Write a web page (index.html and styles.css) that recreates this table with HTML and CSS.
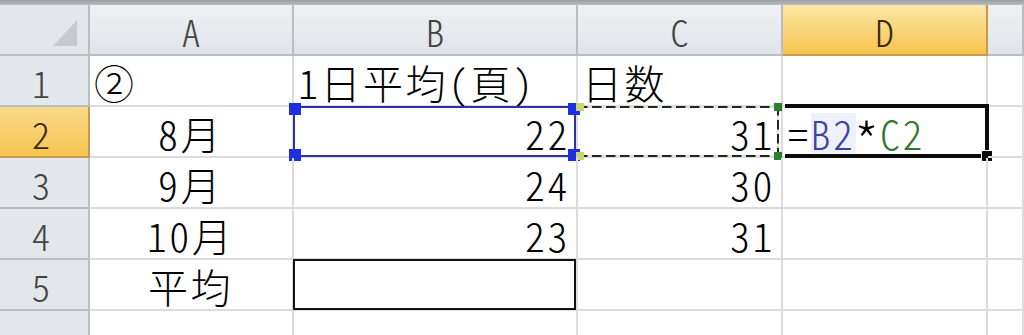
FILE: index.html
```html
<!DOCTYPE html>
<html lang="ja">
<head>
<meta charset="utf-8">
<title>Sheet1</title>
<link rel="stylesheet" href="styles.css">
</head>
<body>
<div class="sheet">
  <div class="topbar"></div>
  <div class="grid">
    <div class="hd corner">
      <svg class="corner-tri" width="24" height="26" viewBox="0 0 24 26"><polygon points="24,0 24,26 0,26" fill="#c6cacf"/></svg>
    </div>
    <div class="hd col">A</div>
    <div class="hd col">B</div>
    <div class="hd col">C</div>
    <div class="hd col active">D</div>
    <div class="hd col"></div>

    <div class="hd row">1</div>
    <div class="cell left">②</div>
    <div class="cell left">1日平均(頁)</div>
    <div class="cell left">日数</div>
    <div class="cell"></div>
    <div class="cell"></div>

    <div class="hd row active">2</div>
    <div class="cell center">8月</div>
    <div class="cell num">22
      <div class="ref-blue">
        <span class="h tl"></span><span class="h tr"></span><span class="h bl"></span><span class="h br"></span>
      </div>
    </div>
    <div class="cell num">31
      <div class="ants">
        <span class="g tl"></span><span class="g tr"></span><span class="g bl"></span><span class="g br"></span>
      </div>
    </div>
    <div class="cell left edit">=<span class="r-b">B2</span><span class="op">*</span><span class="r-c">C2</span>
      <div class="active-box"><span class="fill"></span></div>
    </div>
    <div class="cell"></div>

    <div class="hd row">3</div>
    <div class="cell center">9月</div>
    <div class="cell num">24</div>
    <div class="cell num">30</div>
    <div class="cell"></div>
    <div class="cell"></div>

    <div class="hd row">4</div>
    <div class="cell center">10月</div>
    <div class="cell num">23</div>
    <div class="cell num">31</div>
    <div class="cell"></div>
    <div class="cell"></div>

    <div class="hd row">5</div>
    <div class="cell center">平均</div>
    <div class="cell"><div class="boxed"></div></div>
    <div class="cell"></div>
    <div class="cell"></div>
    <div class="cell"></div>

    <div class="hd row">6</div>
    <div class="cell"></div>
    <div class="cell"></div>
    <div class="cell"></div>
    <div class="cell"></div>
    <div class="cell"></div>
  </div>
</div>
</body>
</html>
```
FILE: styles.css
```css
html, body {
  margin: 0;
  padding: 0;
  background: #ffffff;
}

.sheet {
  width: 1024px;
  height: 335px;
  overflow: hidden;
  font-family: "Noto Sans CJK JP", "Noto Sans", sans-serif;
  font-weight: 300;
  font-feature-settings: "hwid";
}

.topbar {
  height: 5px;
  background: linear-gradient(#9a9ea4, #b9bdc2);
}

.grid {
  display: grid;
  grid-template-columns: 90px 204px 284px 205px 205px 1fr;
  grid-template-rows: 51px 51px 51px 51px 51px 51px 60px;
}

/* headers */
.hd {
  box-sizing: border-box;
  border-right: 2px solid #b9bec5;
  border-bottom: 2px solid #b9bec5;
  background: linear-gradient(#eef0f3, #e0e4e9);
  color: #444444;
  font-size: 37px;
  line-height: 36px;
  display: flex;
  align-items: flex-end;
  justify-content: center;
  padding-bottom: 5px;
}

.hd.row {
  background: #e3e6ea;
  justify-content: center;
  padding-right: 6px;
}

.hd.corner {
  position: relative;
  background: #e3e6ea;
}

.corner-tri {
  position: absolute;
  left: 53px;
  top: 15px;
}

.hd.active {
  background: linear-gradient(#fce7a4, #f7c34f);
  border-right-color: #c69b45;
  border-bottom-color: #c69b45;
  color: #3a2c12;
}

.hd.row.active {
  background: linear-gradient(#fad98a, #f6c552);
}

/* cells */
.cell {
  position: relative;
  box-sizing: border-box;
  border-right: 2px solid #dadcdf;
  border-bottom: 2px solid #dadcdf;
  color: #000;
  font-size: 40px;
  line-height: 40px;
  letter-spacing: 2.5px;
  display: flex;
  align-items: flex-end;
  padding: 0 5px 3px 4px;
  white-space: nowrap;
}

.cell.center { justify-content: center; }
.cell.num { justify-content: flex-end; padding-right: 6px; }
.cell.left { justify-content: flex-start; }

.cell.edit { padding-left: 5px; }

.r-b {
  color: #3c41a8;
  background: #eef0fa;
}

.op {
  display: inline-block;
  margin: 0 1px;
  transform: translateY(7px) scale(1.35);
}

.r-c { color: #2e7a2e; }

/* referenced range B2 */
.ref-blue {
  position: absolute;
  left: -1px;
  top: -1px;
  right: 0;
  bottom: -1px;
  border: 2px solid #2d31a3;
}

.h {
  position: absolute;
  width: 12px;
  height: 12px;
  background: #1e2fe0;
}
.h.tl { left: -6px; top: -5px; }
.h.tr { right: -6px; top: -5px; }
.h.bl { left: -6px; bottom: -6px; }
.h.br { right: -6px; bottom: -6px; }

/* copy/reference marquee on C2 */
.ants {
  position: absolute;
  left: 0;
  top: -1px;
  right: 2px;
  bottom: -1px;
  background:
    repeating-linear-gradient(90deg, #1d2a1d 0 9px, #5e9a5e 9px 10px, #ecd6e8 10px 14px) top / 100% 2px no-repeat,
    repeating-linear-gradient(90deg, #1d2a1d 0 9px, #5e9a5e 9px 10px, #ecd6e8 10px 14px) bottom / 100% 2px no-repeat,
    repeating-linear-gradient(180deg, #1d2a1d 0 9px, #5e9a5e 9px 10px, #ecd6e8 10px 14px) right / 2px 100% no-repeat;
}

.g {
  position: absolute;
  width: 8px;
  height: 8px;
  background: #2f7d2f;
}
.g.tl { left: -2px; top: -3px; background: #c9d66b; }
.g.tr { right: -3px; top: -3px; }
.g.bl { left: -2px; bottom: -3px; background: #c9d66b; }
.g.br { right: -3px; bottom: -3px; }

/* active cell D2 */
.active-box {
  position: absolute;
  left: 2px;
  top: -3px;
  right: -3px;
  bottom: -2px;
  border-top: 4px solid #0b0b0b;
  border-right: 4px solid #0b0b0b;
  border-bottom: 4px solid #0b0b0b;
}

.fill {
  position: absolute;
  right: -8px;
  bottom: -8px;
  width: 10px;
  height: 10px;
  background: #0b0b0b;
  border: 1px solid #ffffff;
}

/* outlined B5 */
.boxed {
  position: absolute;
  left: -1px;
  top: -1px;
  right: 0;
  bottom: -1px;
  border: 2px solid #111111;
}
```
